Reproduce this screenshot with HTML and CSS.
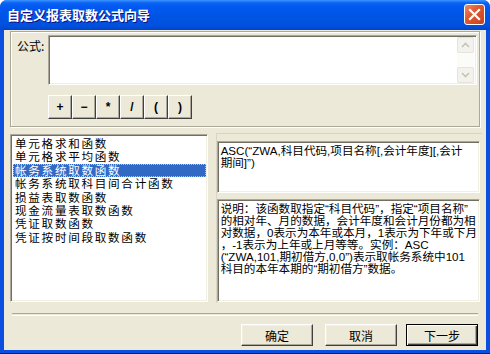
FILE: index.html
```html
<!DOCTYPE html>
<html lang="zh-CN">
<head>
    <meta charset="UTF-8">
    <title>自定义报表取数公式向导</title>
    <link rel="stylesheet" href="styles.css">
</head>
<body>
    <div class="window">
        <div class="titlebar">
            <span class="title">自定义报表取数公式向导</span>
            <span class="close">
                <svg width="13" height="13" viewBox="0 0 13 13">
                    <path d="M2 2 L11 11 M11 2 L2 11" stroke="#fff" stroke-width="2.2" stroke-linecap="square"/>
                </svg>
            </span>
        </div>

        <div class="client">
            <div class="group">
                <div class="formula-row">
                    <span class="label">公式:</span>
                    <div class="edit formula">
                        <div class="edit-text"></div>
                        <div class="vscroll">
                            <span class="sbtn">
                                <svg width="9" height="6" viewBox="0 0 9 6"><path d="M1 5 L4.5 1.5 L8 5" fill="none" stroke="#c6c3b4" stroke-width="1.6"/></svg>
                            </span>
                            <span class="track"></span>
                            <span class="sbtn">
                                <svg width="9" height="6" viewBox="0 0 9 6"><path d="M1 1 L4.5 4.5 L8 1" fill="none" stroke="#c6c3b4" stroke-width="1.6"/></svg>
                            </span>
                        </div>
                    </div>
                </div>
                <div class="ops">
                    <button class="op">+</button>
                    <button class="op">−</button>
                    <button class="op">*</button>
                    <button class="op">/</button>
                    <button class="op">(</button>
                    <button class="op">)</button>
                </div>
            </div>

            <div class="main">
                <ul class="listbox">
                    <li>单元格求和函数</li>
                    <li>单元格求平均函数</li>
                    <li class="selected">帐务系统取数函数</li>
                    <li>帐务系统取科目间合计函数</li>
                    <li>损益表取数函数</li>
                    <li>现金流量表取数函数</li>
                    <li>凭证取数函数</li>
                    <li>凭证按时间段取数函数</li>
                </ul>
                <div class="side">
                    <div class="edit syntax">ASC(“ZWA,科目代码,项目名称[,会计年度][,会计<br>期间]”)</div>
                    <div class="edit desc">说明：该函数取指定“科目代码”，指定“项目名称”<br>的相对年、月的数据，会计年度和会计月份都为相<br>对数据，0表示为本年或本月，1表示为下年或下月<br>，-1表示为上年或上月等等。实例：ASC<br>(“ZWA,101,期初借方,0,0”)表示取帐务系统中101<br>科目的本年本期的“期初借方”数据。</div>
                </div>
            </div>

            <div class="separator"></div>

            <div class="actions">
                <button class="button ok">确定</button>
                <button class="button cancel">取消</button>
                <button class="button default">下一步</button>
            </div>
        </div>
    </div>
</body>
</html>
```

FILE: styles.css
```css
body {
    margin: 0;
    background: #ffffff;
    font-family: "Liberation Sans", "Noto Sans CJK SC", sans-serif;
    font-size: 12px;
    color: #000;
}

.window {
    width: 490px;
    height: 354px;
    display: flex;
    flex-direction: column;
    background: #0a4fe0;
    border-radius: 7px 7px 0 0;
    overflow: hidden;
    box-sizing: border-box;
    border-bottom: 1px solid #001ea0;
}

/* title bar */
.titlebar {
    height: 30px;
    flex: none;
    display: flex;
    align-items: center;
    justify-content: space-between;
    padding: 0 5px 0 7px;
    background: linear-gradient(#3d95ff 0, #0a61f5 3px, #0058ee 8px, #0054e3 18px, #0050de 26px, #0144c4 30px);
}

.title {
    color: #fff;
    font-family: "Noto Sans CJK SC", sans-serif;
    font-weight: bold;
    font-size: 13px;
    text-shadow: 1px 1px 0 #0f1089;
    margin-top: -1px;
}

.close {
    width: 19px;
    height: 19px;
    margin-top: -1px;
    border: 1px solid #fff;
    border-radius: 3px;
    background: linear-gradient(135deg, #f08a6c 0, #e05a32 40%, #c8401a 100%);
    display: flex;
    align-items: center;
    justify-content: center;
}

/* client area */
.client {
    flex: 1;
    margin: 0 4px 3px 4px;
    background: #ece9d8;
    display: flex;
    flex-direction: column;
}

.group {
    margin: 1px 6px 0 6px;
    height: 96px;
    box-sizing: border-box;
    padding: 3px 2px 0 6px;
    border: 1px solid #aca899;
    box-shadow: inset 1px 1px 0 #fff, 1px 1px 0 #fff;
}

.formula-row {
    display: flex;
}

.label {
    width: 31px;
    margin-top: 4px;
    font-family: "Noto Sans CJK SC", sans-serif;
    font-size: 12px;
    line-height: 14px;
}

.edit {
    background: #fff;
    box-sizing: border-box;
    border: 1px solid;
    border-color: #aca899 #fff #fff #aca899;
    box-shadow: inset 1px 1px 0 #716f64, inset -1px -1px 0 #f1efe2;
}

.formula {
    flex: 1;
    height: 50px;
    display: flex;
    padding: 1px 2px 1px 1px;
}

.edit-text {
    flex: 1;
}

.vscroll {
    width: 17px;
    display: flex;
    flex-direction: column;
    background: #fbfbf8;
}

.sbtn {
    height: 16px;
    box-sizing: border-box;
    border: 1px solid #e6e4da;
    border-radius: 2px;
    background: #f3f2ec;
    display: flex;
    align-items: center;
    justify-content: center;
}

.track {
    flex: 1;
}

.ops {
    display: flex;
    margin: 10px 0 0 31px;
}

.op {
    width: 24px;
    height: 24px;
    padding: 0;
    font-family: "Liberation Sans", sans-serif;
    font-weight: bold;
    font-size: 12px;
    background: #ece9d8;
    border: 1px solid;
    border-color: #fff #404040 #404040 #fff;
    box-shadow: inset -1px -1px 0 #aca899;
}

/* list + description */
.main {
    display: flex;
    margin-top: 6px;
    height: 170px;
}

.listbox {
    list-style: none;
    margin: 1px 0 0 6px;
    padding: 2px 0 0 2px;
    width: 198px;
    height: 168px;
    box-sizing: border-box;
    background: #fff;
    border: 1px solid;
    border-color: #aca899 #fff #fff #aca899;
    box-shadow: inset 1px 1px 0 #716f64, inset -1px -1px 0 #f1efe2;
    font-family: "Liberation Sans", "Noto Sans CJK SC", sans-serif;
    font-size: 11.6px;
    letter-spacing: 1.7px;
    line-height: 13.4px;
}

.listbox li {
    padding-left: 2px;
    margin-right: 1px;
    white-space: nowrap;
}

.listbox li.selected {
    background: #316ac5;
    color: #fff;
    outline: 1px dotted #e8c060;
    outline-offset: -1px;
}

.side {
    flex: 1;
    margin: 0 4px 0 8px;
    padding: 7px 2px 1px 0;
    display: flex;
    flex-direction: column;
    gap: 6px;
    border-top: 1px solid #d8d5c4;
    border-left: 1px solid #d8d5c4;
}

.syntax,
.desc {
    padding: 3px 2px 0 3px;
    font-size: 11.6px;
    line-height: 12px;
    white-space: nowrap;
    overflow: hidden;
}

.syntax {
    height: 52px;
}

.desc {
    flex: 1;
}

.separator {
    margin: 10px 8px 0 8px;
    height: 1px;
    border-top: 1px solid #aca899;
    border-bottom: 1px solid #fff;
}

/* dialog buttons */
.actions {
    display: flex;
    justify-content: flex-end;
    margin: 8px 8px 0 0;
}

.button {
    width: 72px;
    height: 22px;
    padding: 0;
    font-family: "Noto Sans CJK SC", sans-serif;
    font-size: 12px;
    background: #ece9d8;
    border: 1px solid;
    border-color: #fff #404040 #404040 #fff;
    box-shadow: inset -1px -1px 0 #aca899, inset 1px 1px 0 #f1efe2;
}

.button.ok {
    margin-right: 12px;
}

.button.cancel {
    margin-right: 9px;
}

.button.default {
    border: 1px solid #000;
    box-shadow: inset 1px 1px 0 #fff, inset -1px -1px 0 #404040, inset -2px -2px 0 #aca899;
}
```
